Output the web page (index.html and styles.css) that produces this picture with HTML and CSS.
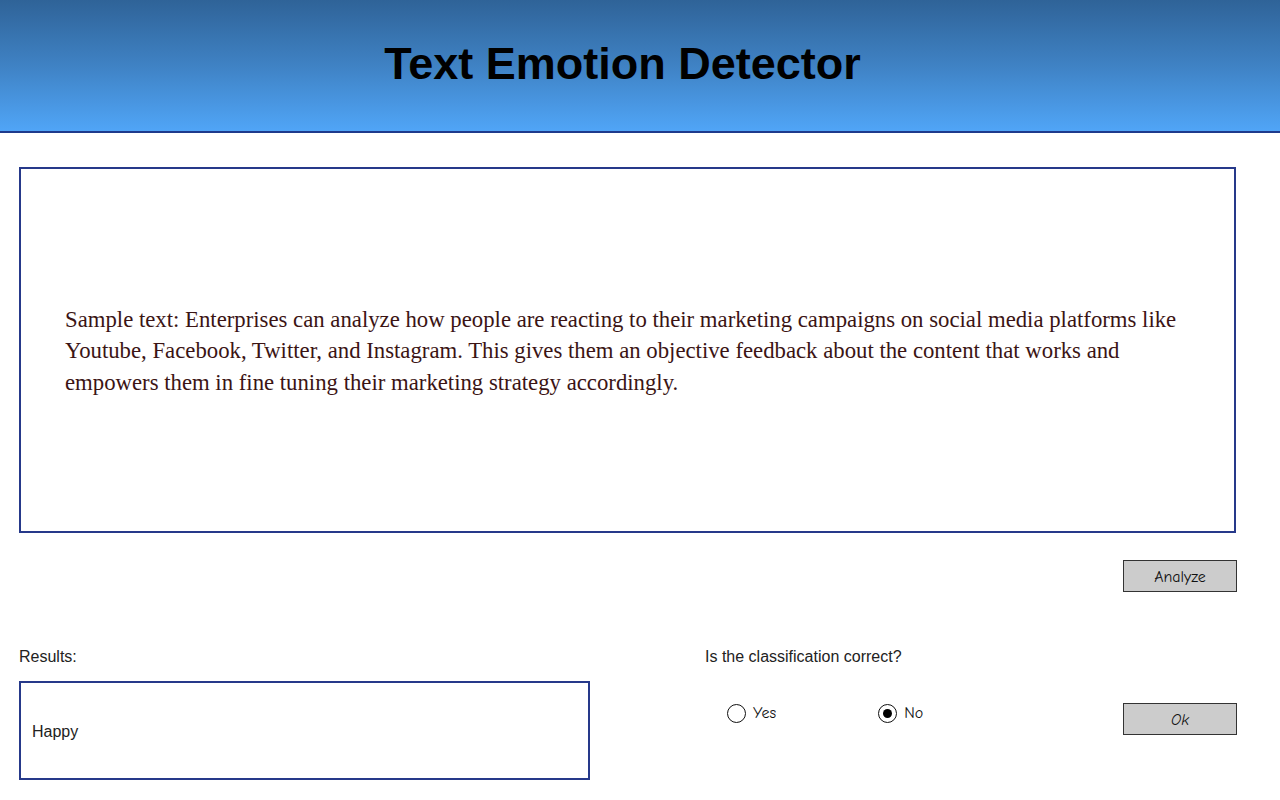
FILE: index.html
```html
<!DOCTYPE html>
<html>
<head>
<meta charset="utf-8">
<link rel="stylesheet" href="styles.css">
</head>
<body>
<header class="header">
  <h1 class="title">Text Emotion Detector</h1>
</header>
<main class="main">
  <section class="input-box">
    <p class="sample">Sample text: Enterprises can analyze how people are reacting to their marketing campaigns on social media platforms like Youtube, Facebook, Twitter, and Instagram. This gives them an objective feedback about the content that works and empowers them in fine tuning their marketing strategy accordingly.</p>
  </section>
  <div class="analyze-row">
    <button class="btn btn-analyze">Analyze</button>
  </div>
  <div class="bottom">
    <div class="results">
      <div class="label">Results:</div>
      <div class="result-box">Happy</div>
    </div>
    <div class="feedback">
      <div class="label">Is the classification correct?</div>
      <div class="feedback-row">
        <label class="radio"><span class="circle"></span><span class="rlabel">Yes</span></label>
        <label class="radio radio-no"><span class="circle checked"></span><span class="rlabel">No</span></label>
        <button class="btn btn-ok">Ok</button>
      </div>
    </div>
  </div>
</main>
</body>
</html>
```
FILE: styles.css
```css
* { box-sizing: border-box; }
html, body { margin: 0; padding: 0; background: #fff; }
body { width: 1280px; height: 800px; overflow: hidden; font-family: "Liberation Sans", Arial, sans-serif; }

.header {
  height: 133px;
  background: linear-gradient(to bottom, #2f6398 0%, #3f82c4 50%, #50a5f7 100%);
  border-bottom: 2px solid #1e3a8c;
  display: flex;
  justify-content: center;
  padding-top: 38px;
}
.title {
  margin: 0;
  font-family: "Liberation Sans", Arial, sans-serif;
  font-weight: bold;
  font-size: 45px;
  line-height: 52px;
  color: #000;
  margin-left: -35px;
}

.main { padding: 34px 0 0 19px; }

.input-box {
  width: 1217px;
  height: 366px;
  border: 2px solid #26398a;
  display: flex;
  align-items: center;
  padding: 0 40px 0 44px;
}
.sample {
  margin: 0;
  font-family: "Liberation Serif", "Times New Roman", serif;
  font-size: 22.75px;
  line-height: 31.5px;
  color: #3b1414;
  padding-top: 2px;
}

.analyze-row {
  width: 1218px;
  display: flex;
  justify-content: flex-end;
  margin-top: 27px;
}
.btn {
  width: 114px;
  height: 32px;
  background: #cccccc;
  border: 1px solid #333;
  font-family: "Comic Neue", "Comic Sans MS", "DejaVu Sans", sans-serif;
  font-size: 16px;
  color: #111;
  padding: 0;
  padding-top: 2px;
}
.btn-ok { font-style: italic; margin-left: auto; margin-top: 11px; }

.bottom {
  display: flex;
  margin-top: 56px;
}
.label { font-size: 16px; color: #222; line-height: 18px; }
.results { width: 686px; }
.result-box {
  margin-top: 15px;
  width: 571px;
  height: 99px;
  border: 2px solid #26398a;
  display: flex;
  align-items: center;
  padding-left: 11px;
  padding-top: 2px;
  font-size: 16px;
  color: #222;
}
.feedback { width: 532px; }
.feedback-row {
  display: flex;
  align-items: flex-start;
  margin-top: 26px;
  padding-left: 22px;
}
.radio { display: flex; align-items: center; font-family: "Comic Neue", "Comic Sans MS", "DejaVu Sans", sans-serif; font-size: 16px; color: #111; height: 20px; margin-top: 11px; }
.radio-no { margin-left: 102px; }
.circle {
  width: 19px;
  height: 19px;
  border: 1.5px solid #111;
  border-radius: 50%;
  display: inline-flex;
  align-items: center;
  justify-content: center;
  margin-right: 7px;
}
.circle.checked::after {
  content: "";
  width: 9px;
  height: 9px;
  border-radius: 50%;
  background: #000;
}
.rlabel { font-size: 16px; }
```
